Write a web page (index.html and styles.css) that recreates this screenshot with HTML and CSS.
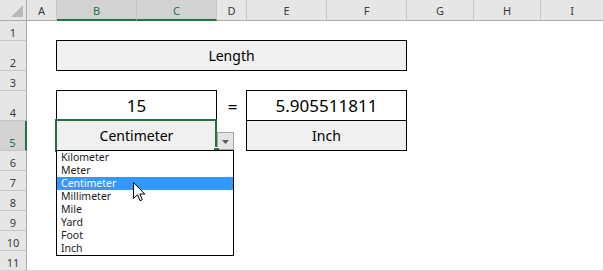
FILE: index.html
```html
<!DOCTYPE html>
<html>
<head>
<meta charset="utf-8">
<link rel="stylesheet" href="styles.css">
</head>
<body>
<div class="sheet">
  <div class="corner"><svg class="tri" width="12" height="12" viewBox="0 0 12 12"><polygon points="12,0 12,12 0,12" fill="#b7b7b7"/></svg></div>
  <div class="ch">A</div>
  <div class="ch sel">B</div>
  <div class="ch sel">C</div>
  <div class="ch">D</div>
  <div class="ch">E</div>
  <div class="ch">F</div>
  <div class="ch">G</div>
  <div class="ch">H</div>
  <div class="ch last">I</div>

  <div class="rh">1</div>
  <div class="rh">2</div>
  <div class="rh">3</div>
  <div class="rh">4</div>
  <div class="rh sel">5</div>
  <div class="rh">6</div>
  <div class="rh">7</div>
  <div class="rh">8</div>
  <div class="rh">9</div>
  <div class="rh">10</div>
  <div class="rh end">11</div>

  <div class="box gray title">Length</div>
  <div class="box big num-a">15</div>
  <div class="eq">=</div>
  <div class="box big num-b">5.905511811</div>
  <div class="box gray unit-a">Centimeter<span class="handle"></span></div>
  <div class="box gray unit-b">Inch</div>
  <div class="edge"></div>

  <div class="dd-btn"><svg width="7" height="4" viewBox="0 0 7 4"><polygon points="0,0 7,0 3.5,4" fill="#5a5a5a"/></svg></div>
  <ul class="list">
    <li>Kilometer</li>
    <li>Meter</li>
    <li class="hl">Centimeter</li>
    <li>Millimeter</li>
    <li>Mile</li>
    <li>Yard</li>
    <li>Foot</li>
    <li>Inch</li>
  </ul>
  <svg class="cursor" width="13" height="20" viewBox="0 0 13 20"><path d="M0.5,0.5 L0.5,16.5 L4.5,12.8 L7,18.7 L9.3,17.7 L6.9,12 L11.8,12 Z" fill="#fff" stroke="#000" stroke-width="1" stroke-linejoin="miter"/></svg>
</div>
</body>
</html>
```
FILE: styles.css
```css
* { box-sizing: border-box; }
body {
  margin: 0;
  background: #fff;
  font-family: "Noto Sans", "DejaVu Sans", sans-serif;
}
.sheet {
  position: relative;
  display: grid;
  width: 604px;
  border-right: 1px solid #d4d4d4;
  grid-template-columns: 27px 30px 80px 80px 30px 80px 80px 67px 67px 62px;
  grid-template-rows: 21px 20px 30px 20px 30px 30px repeat(6, 20px);
}
.corner {
  background: #e6e6e6;
  border-right: 1px solid #ababab;
  border-bottom: 1px solid #ababab;
  display: flex;
  align-items: flex-end;
  justify-content: flex-end;
  padding: 0 3px 3px 0;
}
.tri { display: block; }
.ch {
  background: #e6e6e6;
  border-right: 1px solid #c6c6c6;
  border-bottom: 1px solid #ababab;
  display: flex;
  align-items: center;
  justify-content: center;
  font-size: 11px;
  color: #3a3a3a;
  padding-top: 1px;
}
.ch.sel {
  background: #d2d2d2;
  color: #217346;
  border-bottom: 2px solid #217346;
}
.ch.last { border-right: none; }
.rh {
  grid-column: 1;
  background: #e6e6e6;
  border-right: 1px solid #ababab;
  border-bottom: 1px solid #c6c6c6;
  display: flex;
  align-items: flex-end;
  justify-content: center;
  font-size: 11px;
  line-height: 13px;
  padding-bottom: 1px;
  color: #3a3a3a;
}
.rh.sel {
  background: #d2d2d2;
  color: #217346;
  border-right: 2px solid #217346;
}
.rh.end { border-bottom-color: #d4d4d4; }
.box {
  margin: -1px 0 0 -1px;
  border: 1px solid #000;
  display: flex;
  align-items: center;
  justify-content: center;
  font-size: 14px;
  color: #000;
  background: #fff;
}
.box.gray { background: #f0f0f0; }
.box.big { font-size: 17px; }
.title { grid-column: 3 / 8; grid-row: 3; }
.num-a { grid-column: 3 / 5; grid-row: 5; }
.eq {
  grid-column: 5;
  grid-row: 5;
  display: flex;
  align-items: center;
  justify-content: center;
  font-size: 17px;
  padding-left: 1px;
}
.num-b { grid-column: 6 / 8; grid-row: 5; }
.unit-a {
  grid-column: 3 / 5;
  grid-row: 6;
  position: relative;
}
.unit-a::after {
  content: "";
  position: absolute;
  top: -2px;
  left: -2px;
  right: -1px;
  bottom: -2px;
  border: 2px solid #217346;
}
.handle {
  position: absolute;
  right: -3px;
  bottom: -3px;
  width: 5px;
  height: 5px;
  background: #217346;
  box-shadow: -1px -1px 0 #fff;
  z-index: 1;
}
.unit-b { grid-column: 6 / 8; grid-row: 6; }
.edge {
  grid-column: 2 / -1;
  grid-row: 12;
  align-self: end;
  height: 1px;
  background: #d4d4d4;
}
.dd-btn {
  position: absolute;
  left: 217px;
  top: 132px;
  width: 17px;
  height: 18px;
  border: 1px solid #a6a6a6;
  background: #e4e4e4;
  display: flex;
  align-items: center;
  justify-content: center;
  padding-top: 1px;
}
.dd-btn svg { display: block; }
.list {
  position: absolute;
  left: 56px;
  top: 150px;
  width: 178px;
  height: 106px;
  margin: 0;
  padding: 0;
  list-style: none;
  background: #fff;
  border: 1px solid #000;
  z-index: 2;
}
.list li {
  height: 13px;
  line-height: 13px;
  padding-left: 4px;
  font-size: 10.5px;
  color: #1c1c1c;
  white-space: nowrap;
}
.list li.hl {
  background: #3399ff;
  color: #fff;
}
.cursor {
  position: absolute;
  left: 133px;
  top: 182px;
  z-index: 3;
}
```
